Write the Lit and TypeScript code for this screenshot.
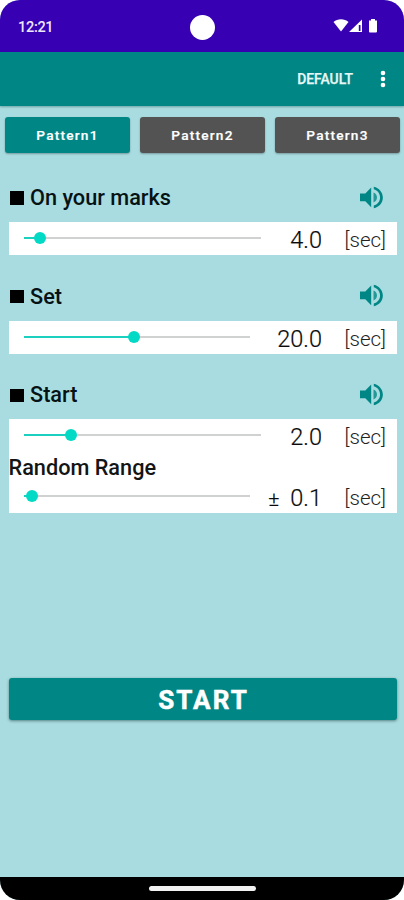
import { LitElement, html, css } from "lit";
import { customElement, property } from "lit/decorators.js";

@customElement("seek-row")
class SeekRow extends LitElement {
  @property() value = "";
  @property() sign = "";
  @property({ type: Number }) fill = 0;
  @property({ type: Number }) track = 237;

  static styles = css`
    :host { display: flex; height: 33px; align-items: flex-start; color: #0a0a0a; }
    .track { margin: 15px 0 0 15.5px; height: 2px; background: #d0d1d1; flex: none; display: flex; align-items: center; }
    .fill { height: 2px; background: #1bd0bf; }
    .thumb { width: 12px; height: 12px; border-radius: 50%; background: #03dac5; margin-left: -6px; flex: none; }
    .val { flex: 1; text-align: right; font-size: 23.5px; line-height: 36px; white-space: pre; font-weight: 300; -webkit-text-stroke: .2px; }
    .pm { margin-right: 11px; font-size: 21px; }
    .unit { width: 64px; margin-right: 11px; text-align: right; font-size: 20.5px; line-height: 37px; color: #222; font-weight: 300; }
  `;

  render() {
    return html`
      <div class="track" style="width:${this.track}px">
        <div class="fill" style="width:${this.fill}px"></div>
        <div class="thumb"></div>
      </div>
      <div class="val">${this.sign ? html`<span class="pm">${this.sign}</span>` : ""}${this.value}</div>
      <div class="unit">[sec]</div>
    `;
  }
}

@customElement("section-head")
class SectionHead extends LitElement {
  @property() label = "";

  static styles = css`
    :host { display: flex; align-items: center; height: 36px; padding: 0 19px 0 10px; }
    .sq { width: 13.5px; height: 13.5px; background: #000; margin: 0 6.5px 0 0; }
    .t { flex: 1; font-size: 21.7px; font-weight: 500; line-height: 36px; color: #061214; }
    svg { width: 28px; height: 28px; fill: #008785; margin-top: -3px; }
  `;

  render() {
    return html`
      <div class="sq"></div>
      <div class="t">${this.label}</div>
      <svg viewBox="0 0 30 30">
        <path d="M3.200 11.300h5.700l6.300-6.400v21.200l-6.300-6.500H3.200z"/>
        <path d="M17.700 10.200c2.400 1 3.700 3 3.700 5.300s-1.300 4.300-3.700 5.300z" opacity=".8"/>
        <path d="M18 3.900c5.700 1.300 9.700 6 9.700 11.600s-4 10.300-9.700 11.600v-2.900c4-1.200 6.700-4.700 6.700-8.700s-2.700-7.500-6.700-8.700z"/>
      </svg>
    `;
  }
}

@customElement("app-root")
class AppRoot extends LitElement {
  static styles = css`
    :host { display: block; width: 404px; height: 900px; background: #fff; font-family: Roboto, sans-serif; }
    .phone { height: 900px; display: flex; flex-direction: column; background: #a9dce0; border-radius: 20px; overflow: hidden; box-sizing: border-box; }
    .status { flex: none; height: 51.5px; background: #3700b3; color: #eee8ff; display: grid; grid-template-columns: 1fr 26px 1fr; align-items: center; }
    .time { padding: 3px 0 0 18px; font-size: 14.5px; font-weight: 500; letter-spacing: -0.3px; }
    .cam { width: 25px; height: 25px; border-radius: 50%; background: #fff; margin: 3px 0 0 0.5px; }
    .sys { justify-self: end; width: 46px; height: 16px; margin: 1px 25px 0 0; fill: #fff; }
    .bar { flex: none; height: 54.5px; background: #008785; color: #e6f7f6; display: flex; align-items: center; justify-content: flex-end; box-shadow: 0 1px 2px rgba(0, 60, 60, .35); }
    .def { font-size: 13.9px; font-weight: 500; margin: 0 25px 0 0; -webkit-text-stroke: .25px; }
    .more { width: 10px; height: 20px; margin-right: 16px; fill: #fff; }
    .tabs { flex: none; display: grid; grid-template-columns: 125px 125px 125px; gap: 10px; padding: 11px 4px 0 5px; }
    .tab { height: 36px; border-radius: 3px; background: #535353; color: #fff; display: grid; place-items: center; font-size: 13.7px; font-weight: 500; letter-spacing: 1.2px; box-shadow: 0 1px 2px rgba(0, 0, 0, .3); -webkit-text-stroke: .2px; }
    .tab.on { background: #008785; }
    section { flex: none; height: 98.7px; display: flex; flex-direction: column; }
    section:first-of-type { margin-top: 27px; }
    section:last-of-type { height: auto; }
    section-head { margin-bottom: 6px; }
    .panel { flex: none; background: #fff; margin: 0 7px 0 8.5px; }
    .sub { height: 28px; font-size: 21.7px; line-height: 31px; font-weight: 500; color: #141414; }
    .panel.last { height: 94px; }
    .start { flex: none; margin: 165px 7.5px 0 8.5px; height: 42px; background: #008785; color: #fff; border-radius: 3px; display: grid; place-items: center; font-size: 26px; line-height: 44px; font-weight: 700; letter-spacing: 2.1px; text-indent: 2px; -webkit-text-stroke: .5px; box-shadow: 0 1px 3px rgba(0, 40, 40, .5); }
    .nav { flex: none; height: 23px; margin-top: auto; background: #000; display: grid; place-items: center; }
    .pill { width: 107px; height: 5px; border-radius: 3px; background: #f2f2f2; }
  `;

  render() {
    return html`
      <div class="phone">
        <div class="status">
          <div class="time">12:21</div>
          <div class="cam"></div>
          <svg class="sys" viewBox="0 0 46 16">
            <path d="M0.500 4C4.500 .3 11.500 .3 15.500 4L8 13.500z"/>
            <path d="M16 14L29 1.500V14zM25.800 7v6h1.700V7z" fill-rule="evenodd"/>
            <path d="M36 2.500h2V1h4v1.500h2V13.500q0 1-1 1h-6q-1 0-1-1z"/>
          </svg>
        </div>
        <div class="bar">
          <div class="def">DEFAULT</div>
          <svg class="more" viewBox="0 0 10 20">
            <circle cx="5" cy="4" r="2.300"/><circle cx="5" cy="10" r="2.300"/><circle cx="5" cy="16" r="2.300"/>
          </svg>
        </div>
        <div class="tabs">
          <div class="tab on">Pattern1</div>
          <div class="tab">Pattern2</div>
          <div class="tab">Pattern3</div>
        </div>
        <section>
          <section-head label="On your marks"></section-head>
          <div class="panel"><seek-row value="4.0" .fill=${15.5}></seek-row></div>
        </section>
        <section>
          <section-head label="Set"></section-head>
          <div class="panel"><seek-row value="20.0" .fill=${110} .track=${226}></seek-row></div>
        </section>
        <section>
          <section-head label="Start"></section-head>
          <div class="panel last">
            <seek-row value="2.0" .fill=${47}></seek-row>
            <div class="sub">Random Range</div>
            <seek-row value="0.1" sign="±" .fill=${7.5} .track=${226}></seek-row>
          </div>
        </section>
        <div class="start">START</div>
        <div class="nav"><div class="pill"></div></div>
      </div>
    `;
  }
}
